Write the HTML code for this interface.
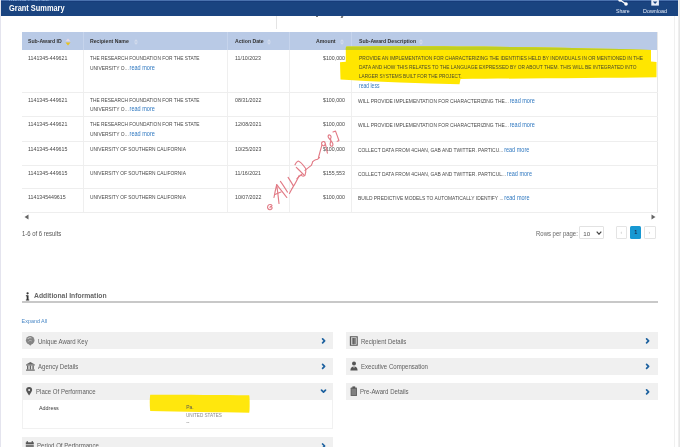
<!DOCTYPE html>
<html><head><meta charset="utf-8">
<style>
*{margin:0;padding:0;box-sizing:border-box}
html,body{width:680px;height:447px;overflow:hidden;background:#fff;font-family:"Liberation Sans",sans-serif;position:relative}
.a{position:absolute;white-space:nowrap}
.t{position:absolute;white-space:nowrap;line-height:1;transform-origin:0 50%;transform:translateY(-50%) scaleX(var(--sx,1))}
#hdr{left:1px;top:0;width:677px;height:15.5px;background:#1a4480}
.th{position:absolute;top:32.3px;height:17.5px;background:#b9cae6}
.hl{font-weight:bold;color:#333;font-size:6.2px;--sx:0.835}
.cell{color:#484848;font-size:5.6px;--sx:0.865}
.dg{--sx:0.94}
.lnk{color:#2f78c0}
.rm{font-size:6.3px;margin-left:-0.6px}
.vl{position:absolute;width:1px;background:#efefef}
.hlc{position:absolute;width:1px;background:#c6d4ec}
.rl{position:absolute;left:22px;width:636px;height:1px;background:#eeeeee}
.acc{position:absolute;height:17px;background:#f0f0f0}
.acct{color:#606060;font-size:6.8px;--sx:0.89}
.chev{position:absolute}
</style></head><body><div id="wrap" style="position:absolute;left:0;top:0;width:680px;height:447px;filter:blur(0.3px);background:#fff">
<!-- side strips -->
<div class="a" style="left:0;top:0;width:1px;height:447px;background:#e4e4ee"></div>
<div class="a" style="left:678px;top:0;width:1px;height:447px;background:#eeeeee"></div><div class="a" style="left:679px;top:0;width:1px;height:447px;background:#e6e6e6"></div>
<div class="a" style="left:674px;top:16px;width:1px;height:431px;background:#f0f0f0"></div>

<!-- header -->
<div id="hdr" class="a"></div>
<div class="a" style="left:1px;top:0;width:677px;height:1px;background:#4a72ae"></div><div class="a" style="left:1px;top:1px;width:677px;height:1px;background:#173c7a"></div>
<div class="t" style="--sx:0.88;left:9.4px;top:-1px;font-size:5px;font-weight:bold;color:#8fb0de;letter-spacing:0.3px">AWARD PROFILE</div>
<div class="t" id="gs" style="--sx:0.872;left:9.4px;top:7.7px;font-size:8.5px;font-weight:bold;color:#fff">Grant Summary</div>
<div class="t" id="share" style="--sx:0.913;left:615.6px;top:12px;font-size:5.6px;color:#e8eefa">Share</div>
<div class="t" id="dl" style="--sx:0.964;left:643px;top:12.2px;font-size:5.6px;color:#e8eefa">Download</div>
<svg class="a" style="left:617px;top:-1.3px" width="12" height="8" viewBox="0 0 12 8">
  <circle cx="3" cy="1" r="1.8" fill="#fff"/><circle cx="9" cy="5" r="1.8" fill="#fff"/>
  <line x1="3" y1="1" x2="9" y2="5" stroke="#fff" stroke-width="1.3"/>
</svg>
<svg class="a" style="left:651px;top:0px" width="9" height="7" viewBox="0 0 9 7">
  <rect x="0.3" y="0" width="7.6" height="5.6" fill="#e8eefa"/>
  <path d="M1.8 1.6 L6.4 1.6 L4.1 4 Z" fill="#1a4480"/>
</svg>

<!-- thin line above table -->
<div class="vl" style="left:276px;top:16px;height:13px;background:#e4e4e4"></div>
<div class="a" style="left:316px;top:15.5px;width:2px;height:1.5px;background:#777"></div>
<div class="a" style="left:341px;top:15.5px;width:2px;height:2px;background:#777;transform:skewX(-20deg)"></div>

<!-- table header -->
<div class="th" style="left:22px;width:636px"></div>
<div class="hlc" style="left:83px;top:32.3px;height:17.5px"></div>
<div class="hlc" style="left:227px;top:32.3px;height:17.5px"></div>
<div class="hlc" style="left:289px;top:32.3px;height:17.5px"></div>
<div class="hlc" style="left:351px;top:32.3px;height:17.5px"></div>
<div class="t hl" id="h1" style="left:28.1px;top:41.3px">Sub-Award ID</div>
<div class="t hl" id="h2" style="left:89.9px;top:41.3px">Recipient Name</div>
<div class="t hl" id="h3" style="left:234.9px;top:41.3px">Action Date</div>
<div class="t hl" id="h4" style="left:316.2px;top:41.3px">Amount</div>
<div class="t hl" id="h5" style="left:358.6px;top:41.3px">Sub-Award Description</div>
<!-- sort icons -->
<svg class="a" style="left:65px;top:38px" width="6" height="8" viewBox="0 0 6 8"><path d="M3 0.5 L5.5 3.3 H0.5Z" fill="#e8d8e4"/><path d="M3 7.5 L5.5 4.4 H0.5Z" fill="#e9c21a"/></svg>
<svg class="a" style="left:132.5px;top:38px" width="6" height="8" viewBox="0 0 6 8"><path d="M3 1.2 L5 3.4 H1Z" fill="#d3dcec"/><path d="M3 6.8 L5 4.6 H1Z" fill="#d3dcec"/></svg>
<svg class="a" style="left:265.6px;top:38px" width="6" height="8" viewBox="0 0 6 8"><path d="M3 1.2 L5 3.4 H1Z" fill="#d3dcec"/><path d="M3 6.8 L5 4.6 H1Z" fill="#d3dcec"/></svg>
<svg class="a" style="left:339px;top:38px" width="6" height="8" viewBox="0 0 6 8"><path d="M3 1.2 L5 3.4 H1Z" fill="#d3dcec"/><path d="M3 6.8 L5 4.6 H1Z" fill="#d3dcec"/></svg>
<svg class="a" style="left:418px;top:38px" width="6" height="8" viewBox="0 0 6 8"><path d="M3 1.2 L5 3.4 H1Z" fill="#d3dcec"/><path d="M3 6.8 L5 4.6 H1Z" fill="#d3dcec"/></svg>

<!-- body column lines -->
<div class="vl" style="left:83px;top:50px;height:162.5px"></div>
<div class="vl" style="left:227px;top:50px;height:162.5px"></div>
<div class="vl" style="left:289px;top:50px;height:162.5px"></div>
<div class="vl" style="left:351px;top:50px;height:162.5px"></div>
<div class="vl" style="left:657px;top:32.3px;height:180px;background:#e8e8e8"></div>

<!-- row lines -->
<div class="rl" style="top:92px"></div>
<div class="rl" style="top:116.3px"></div>
<div class="rl" style="top:140.6px"></div>
<div class="rl" style="top:164.7px"></div>
<div class="rl" style="top:188.4px"></div>
<div class="rl" style="top:212px"></div>
<!-- scrollbar -->

<svg class="a" style="left:23.5px;top:213.8px" width="5" height="6" viewBox="0 0 5 6"><path d="M0.5 3 L4.5 0.5 V5.5Z" fill="#666"/></svg>
<svg class="a" style="left:651.2px;top:214.3px" width="5" height="6" viewBox="0 0 5 6"><path d="M4.5 3 L0.5 0.5 V5.5Z" fill="#666"/></svg>

<!-- highlight row1 -->
<svg class="a" style="left:0;top:0" width="680" height="447" viewBox="0 0 680 447">
  <path d="M347 46.6 C420 46 520 46.5 620 49 L651 50 L651 61.5 L656.5 62 L656.5 77.3 C600 78 520 78.5 460.5 79 L459.5 84.3 C420 83.5 380 82 340.5 79.5 L340 62.3 L345.8 61.8 L345.8 48 C346 47 346.5 46.7 347 46.6Z" fill="#ffe600"/>
  <path d="M347 46.6 C420 46 520 46.5 620 49 L651 50 L651 50 L345.8 50 L345.8 48 C346 47 346.5 46.7 347 46.6Z" fill="#c2cf1e"/>
</svg>

<!-- row 1 -->
<div class="t cell dg" id="r1c1" style="left:28.2px;top:59.2px">1141345-449621</div>
<div class="t cell" id="r1c2a" style="left:90.3px;top:59.3px">THE RESEARCH FOUNDATION FOR THE STATE</div>
<div class="t cell" id="r1c2b" style="--sx:0.88;left:90.3px;top:67.7px">UNIVERSITY O... <span class="lnk rm">read more</span></div>
<div class="t cell dg" id="r1c3" style="left:234.8px;top:59.2px">11/10/2023</div>
<div class="t cell dg" id="r1c4" style="left:323px;top:59.2px">$100,000</div>
<div class="t cell" id="r1d1" style="left:359px;top:59.1px;color:#4a4a2a">PROVIDE AN IMPLEMENTATION FOR CHARACTERIZING THE IDENTITIES HELD BY INDIVIDUALS IN OR MENTIONED IN THE</div>
<div class="t cell" id="r1d2" style="left:359px;top:67.9px;color:#4a4a2a">DATA AND HOW THIS RELATES TO THE LANGUAGE EXPRESSED BY OR ABOUT THEM. THIS WILL BE INTEGRATED INTO</div>
<div class="t cell" id="r1d3" style="--sx:0.835;left:359px;top:76.7px;color:#4a4a2a">LARGER SYSTEMS BUILT FOR THE PROJECT.</div>
<div class="t cell lnk" id="r1d4" style="font-size:6.3px;--sx:0.80;left:359px;top:85.6px">read less</div>

<!-- row 2 -->
<div class="t cell dg" style="left:28.2px;top:100.6px">1141345-449621</div>
<div class="t cell" style="left:90.3px;top:100.8px">THE RESEARCH FOUNDATION FOR THE STATE</div>
<div class="t cell" style="--sx:0.88;left:90.3px;top:109.4px">UNIVERSITY O... <span class="lnk rm">read more</span></div>
<div class="t cell dg" style="left:234.8px;top:100.8px">08/31/2022</div>
<div class="t cell dg" style="left:323px;top:100.8px">$100,000</div>
<div class="t cell" id="r2d" style="--sx:0.877;left:358.4px;top:100.8px">WILL PROVIDE IMPLEMENTATION FOR CHARACTERIZING THE... <span class="lnk rm">read more</span></div>

<!-- row 3 -->
<div class="t cell dg" style="left:28.2px;top:125.1px">1141345-449621</div>
<div class="t cell" style="left:90.3px;top:125.3px">THE RESEARCH FOUNDATION FOR THE STATE</div>
<div class="t cell" style="--sx:0.88;left:90.3px;top:133.8px">UNIVERSITY O... <span class="lnk rm">read more</span></div>
<div class="t cell dg" style="left:234.8px;top:125.1px">12/08/2021</div>
<div class="t cell dg" style="left:323px;top:125.1px">$100,000</div>
<div class="t cell" style="--sx:0.877;left:358.4px;top:125.1px">WILL PROVIDE IMPLEMENTATION FOR CHARACTERIZING THE... <span class="lnk rm">read more</span></div>

<!-- row 4 -->
<div class="t cell dg" style="left:28.2px;top:149.6px">1141345-449615</div>
<div class="t cell" style="left:90.3px;top:149.6px">UNIVERSITY OF SOUTHERN CALIFORNIA</div>
<div class="t cell dg" style="left:234.8px;top:149.6px">10/25/2023</div>
<div class="t cell dg" style="left:323px;top:149.6px">$100,000</div>
<div class="t cell" style="--sx:0.877;left:358.4px;top:149.9px">COLLECT DATA FROM 4CHAN, GAB AND TWITTER. PARTICU... <span class="lnk rm">read more</span></div>

<!-- row 5 -->
<div class="t cell dg" style="left:28.2px;top:173.6px">1141345-449615</div>
<div class="t cell" style="left:90.3px;top:173.6px">UNIVERSITY OF SOUTHERN CALIFORNIA</div>
<div class="t cell dg" style="left:234.8px;top:173.6px">11/16/2021</div>
<div class="t cell dg" style="left:323px;top:173.6px">$155,553</div>
<div class="t cell" style="--sx:0.877;left:358.4px;top:174.0px">COLLECT DATA FROM 4CHAN, GAB AND TWITTER. PARTICUL... <span class="lnk rm">read more</span></div>

<!-- row 6 -->
<div class="t cell dg" style="left:28.2px;top:197.6px">1141345449615</div>
<div class="t cell" style="left:90.3px;top:197.6px">UNIVERSITY OF SOUTHERN CALIFORNIA</div>
<div class="t cell dg" style="left:234.8px;top:197.6px">10/07/2022</div>
<div class="t cell dg" style="left:323px;top:197.6px">$100,000</div>
<div class="t cell" style="--sx:0.877;left:358.4px;top:198.2px">BUILD PREDICTIVE MODELS TO AUTOMATICALLY IDENTIFY ... <span class="lnk rm">read more</span></div>

<!-- watermark -->
<svg class="a" style="left:0;top:0" width="680" height="447" viewBox="0 0 680 447">
<g fill="none" stroke="#e27b86" stroke-width="1.15" stroke-linecap="round" stroke-linejoin="round">
<path d="M272 205.6 C271.2 204 268.7 204.1 267.8 206 C267 208 268.2 209.9 270.2 209.7 C272 209.4 272.7 207.7 271.6 206.7 C270.7 206 269.7 206.8 270.1 207.7"/>
<path d="M274 197.5 C274.8 193 275.7 188.8 276.7 184.7 C277.6 191 278.3 197.5 279 203.5"/>
<path d="M275 194.5 C277 193.5 279 192.7 281 192"/>
<path d="M276.7 184.7 C280 188.8 283.5 193 286.8 197.5"/>
<path d="M280.4 181.4 C283 184.8 285.2 188.5 287.4 192.1"/>
<path d="M288.1 177.4 C290 180.2 291.8 183.2 293.5 186.1 C292 188.5 290.7 191 289.4 193.5 M293.5 186.1 C295.5 183.2 297.4 179.2 299.2 175.4"/>
<path d="M296.3 167.3 C299 170 301.8 172.8 304.4 175.4"/>
<path d="M295 164.8 C295.8 162.8 297 161.4 298.2 161 C299.8 161.4 302.8 164.5 305.7 168.5 C306 171 305.7 173.5 305 175.4 C303.5 176.5 302 176.2 301 175"/>
<path d="M296.9 178.6 C298.6 177.1 300.2 175.7 301.9 174.2"/>
<path d="M305 170.4 C307.1 168.7 309.2 167 311.3 165.4 C312 164 312.6 162.6 312.6 161.7 C313.5 161 314.3 160.4 315.1 160 C316 159.7 316.8 159.4 317.7 159.2 C318.3 158.6 318.9 158 319.4 157.5"/>
<path d="M318.5 157.5 C319.6 153.3 320.7 149.2 321.9 145.1"/>
<path d="M325.2 143.2 C325 141.6 323.4 141 322.2 142 C321 143.1 321.5 145.4 323.2 145.8 C324.5 146 325.3 144.8 325.2 143.2 C326 146.5 326.7 149.8 327.4 153.2"/>
<path d="M330.4 138.8 C331.5 137.5 331.2 135.5 329.8 135 C328.4 134.6 327.6 136.2 328.5 137.6 C329.5 139.2 332 141.5 332.8 143.6 C333.2 145.2 332.4 146.6 331.2 146.2 C330 145.8 329.8 144 330.6 142 C331 141 331 139.8 330.4 138.8"/>
<path d="M333 132 C333.8 131.6 334.6 131.3 335.5 131.1 C336.7 134.2 337.9 137.4 338.9 140.5 C338.4 141 337.8 141.2 337.2 141.3"/>
</g>
</svg>

<!-- results / pagination -->
<div class="t" id="res" style="--sx:0.93;left:21.8px;top:233.9px;font-size:6.4px;color:#555">1-6 of 6 results</div>
<div class="t" id="rpp" style="--sx:0.935;left:535.9px;top:233.9px;font-size:6.4px;color:#666">Rows per page:</div>
<div class="a" style="left:578.5px;top:226px;width:25.5px;height:12.8px;border:1px solid #e2e2e2;border-radius:1px"></div>
<div class="t" style="left:583.2px;top:233.6px;font-size:6.2px;color:#555">10</div>
<svg class="a" style="left:596.3px;top:230.6px" width="6" height="4" viewBox="0 0 6 4"><path d="M0.7 0.7 L3 3.2 L5.3 0.7" fill="none" stroke="#444" stroke-width="1.2"/></svg>
<div class="a" style="left:615.8px;top:226px;width:11.5px;height:13px;border:1px solid #e4e4e4;border-radius:1px"></div>
<div class="t" style="left:620.5px;top:232.3px;font-size:5px;color:#bbb">‹</div>
<div class="a" style="left:629.9px;top:226px;width:11.4px;height:13px;background:#1798d2;border-radius:1.5px"></div>
<div class="t" style="left:634.3px;top:233.1px;font-size:5.4px;color:#1a3050;font-weight:bold">1</div>
<div class="a" style="left:643.8px;top:226px;width:11.8px;height:13px;border:1px solid #e4e4e4;border-radius:1px"></div>
<div class="t" style="left:648.5px;top:232.3px;font-size:5px;color:#bbb">›</div>

<!-- additional information -->
<svg class="a" style="left:0;top:0" width="680" height="447" viewBox="0 0 680 447"><circle cx="27.6" cy="293.3" r="1.15" fill="#333"/><path d="M25.9 295.2 H28.5 V299.4 H29.2 V300.5 H25.9 V299.4 H26.7 V296.2 H25.9Z" fill="#333"/></svg>
<div class="t" id="ai" style="--sx:0.873;left:34px;top:296.2px;font-size:7.8px;font-weight:bold;color:#666">Additional Information</div>
<div class="a" style="left:21.6px;top:301px;width:636px;height:2px;background:#c8c8c8"></div>
<div class="t lnk" id="ea" style="--sx:1.0;left:21.6px;top:321.7px;font-size:5.4px;color:#4a88c6">Expand All</div>

<!-- accordions left -->
<div class="acc" style="left:22px;top:332px;width:311.2px"></div>
<div class="acc" style="left:22px;top:357.8px;width:311.2px"></div>
<div class="acc" style="left:22px;top:383.2px;width:311.2px"></div>
<div class="a" style="left:22px;top:400px;width:311.2px;height:29px;border:1px solid #f1f1f1;border-top:none"></div>

<div class="acc" style="left:22px;top:437px;width:311.2px;height:12px"></div>

<div class="t acct" id="a1" style="left:37.9px;top:342.0px">Unique Award Key</div>
<div class="t acct" id="a2" style="left:37.9px;top:367.4px">Agency Details</div>
<div class="t acct" id="a3" style="left:35.9px;top:392.1px">Place Of Performance</div>
<div class="t acct" id="a4" style="left:36.5px;top:446.4px">Period Of Performance</div>
<div class="t" id="addr" style="--sx:0.9;left:38.6px;top:408.2px;font-size:6px;color:#3a3a3a">Address</div>

<!-- yellow on address -->
<svg class="a" style="left:0;top:0" width="680" height="447" viewBox="0 0 680 447">
  <path d="M150.2 394.8 C190 394.8 220 395 249.2 395.3 C249.8 398 249.8 410 249.2 412.7 C220 412.3 180 411.6 150.2 411 C149.6 406 149.6 399 150.2 394.8Z" fill="#ffe600" fill-opacity="0.95"/>
</svg>
<div class="t" style="left:186.2px;top:407.3px;font-size:5px;color:#555">Pa.</div>
<div class="t" id="us" style="--sx:0.965;left:186.2px;top:416px;font-size:4.8px;color:#8a8a8a">UNITED STATES</div>
<div class="t" style="left:186.2px;top:422.3px;font-size:5px;color:#777">--</div>

<!-- accordions right -->
<div class="acc" style="left:346px;top:332.3px;width:311.5px"></div>
<div class="acc" style="left:346px;top:357.8px;width:311.5px"></div>
<div class="acc" style="left:346px;top:383.3px;width:311.5px"></div>
<div class="t acct" id="b1" style="left:361.3px;top:341.9px">Recipient Details</div>
<div class="t acct" id="b2" style="left:361.3px;top:367.1px">Executive Compensation</div>
<div class="t acct" id="b3" style="left:360px;top:392.2px">Pre-Award Details</div>

<!-- icons -->
<svg class="a" style="left:0;top:0" width="680" height="447" viewBox="0 0 680 447">
  <!-- fingerprint/globe -->
  <circle cx="30.2" cy="340.3" r="4.3" fill="#858585"/><path d="M27.6 339 C28.4 337.8 30 337.4 31.4 338" stroke="#e6e6e6" stroke-width="0.8" fill="none"/><path d="M28.4 341.6 C29 340.4 30.6 340 31.8 341" stroke="#cfcfcf" stroke-width="0.6" fill="none"/>
  <path d="M28.8 344 L30.3 345.8 L31.6 344Z" fill="#858585"/>
  <!-- bank -->
  <path d="M26 364.5 L30.4 362 L34.8 364.5Z" fill="#666"/>
  <rect x="26" y="364.5" width="8.8" height="1" fill="#666"/>
  <rect x="27" y="365.5" width="1.4" height="4" fill="#666"/><rect x="29.7" y="365.5" width="1.4" height="4" fill="#666"/><rect x="32.4" y="365.5" width="1.4" height="4" fill="#666"/>
  <rect x="26" y="369.5" width="8.8" height="1.2" fill="#666"/>
  <!-- pin -->
  <path d="M29.1 395.5 C27 392.5 26.1 391 26.1 390 A3 3 0 0 1 32.1 390 C32.1 391 31.2 392.5 29.1 395.5Z" fill="#555"/>
  <circle cx="29.1" cy="390" r="1" fill="#efefef"/>
  <!-- calendar -->
  <rect x="26.6" y="441.2" width="1.4" height="1.6" fill="#555"/><rect x="31.6" y="441.2" width="1.4" height="1.6" fill="#555"/><rect x="25.8" y="442.3" width="8" height="1.8" fill="#555"/><path d="M25.8 444.6 H33.8 V447 H25.8Z" fill="#777"/>
  <!-- building -->
  <rect x="350.4" y="336.8" width="6.8" height="8.4" fill="none" stroke="#555" stroke-width="1.1"/>
  <rect x="351.6" y="338" width="4.4" height="6" fill="#8a8a8a"/>
  <rect x="353.3" y="338" width="1" height="6.4" fill="#555"/>
  <!-- person -->
  <circle cx="354" cy="363.6" r="2" fill="#555"/>
  <path d="M350.4 370.6 C350.4 367.6 351.8 366.4 354 366.4 C356.2 366.4 357.6 367.6 357.6 370.6Z" fill="#555"/>
  <path d="M353.2 366.6 L354 368.6 L354.8 366.6Z" fill="#ddd"/>
  <!-- clipboard -->
  <rect x="350.6" y="387.6" width="6.4" height="8.4" rx="0.6" fill="#666"/>
  <rect x="351.6" y="389" width="4.4" height="6" fill="#808080"/>
  <rect x="352.4" y="386.4" width="2.8" height="1.8" fill="#555"/>
  </svg>
<!-- chevrons -->
<svg class="a" style="left:0;top:0" width="680" height="447" viewBox="0 0 680 447">
  <g fill="none" stroke="#1d619f" stroke-width="1.7" stroke-linecap="round" stroke-linejoin="round">
    <path d="M322.6 338.8 L324.6 340.8 L322.6 342.8"/>
    <path d="M322.6 364.3 L324.6 366.3 L322.6 368.3"/>
    <path d="M321.5 390.2 L323.5 392.2 L325.5 390.2"/>
    <path d="M322.6 444 L324.6 446 L322.6 448"/>
    <path d="M646.6 338.8 L648.6 340.8 L646.6 342.8"/>
    <path d="M646.6 364.3 L648.6 366.3 L646.6 368.3"/>
    <path d="M646.6 389.8 L648.6 391.8 L646.6 393.8"/>
  </g>
</svg>
</div></body></html>
